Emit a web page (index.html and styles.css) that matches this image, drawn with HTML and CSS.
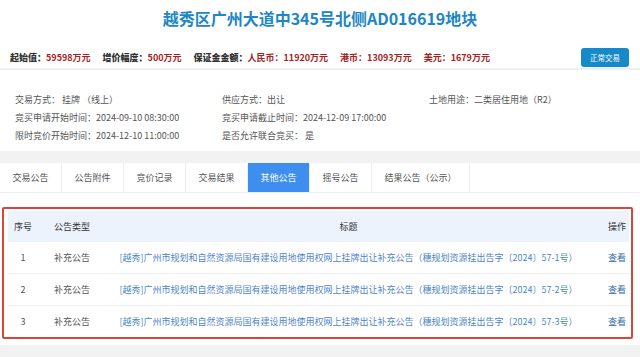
FILE: index.html
```html
<!DOCTYPE html>
<html lang="zh-CN">
<head>
  <meta charset="UTF-8" />
  <meta name="viewport" content="width=device-width, initial-scale=1.0"/>
  <title>越秀区广州大道中345号北侧AD016619地块</title>
  <link rel="stylesheet" href="styles.css">
</head>
<body>
  <h1 class="title">越秀区广州大道中345号北侧AD016619地块</h1>

  <div class="stats">
    <span class="stat"><b>起始值：</b><em>59598万元</em></span>
    <span class="stat"><b>增价幅度：</b><em>500万元</em></span>
    <span class="stat"><b>保证金金额：</b><em>人民币：11920万元</em></span>
    <span class="stat"><em>港币：13093万元</em></span>
    <span class="stat"><em>美元：1679万元</em></span>
    <button class="status-btn">正常交易</button>
  </div>

  <div class="info">
    <div>交易方式： 挂牌 （线上）</div>
    <div>供应方式：出让</div>
    <div>土地用途：二类居住用地（R2）</div>
    <div>竞买申请开始时间：2024-09-10 08:30:00</div>
    <div>竞买申请截止时间：2024-12-09 17:00:00</div>
    <div></div>
    <div>限时竞价开始时间：2024-12-10 11:00:00</div>
    <div>是否允许联合竞买： 是</div>
    <div></div>
  </div>

  <div class="band"></div>

  <ul class="tabs">
    <li>交易公告</li>
    <li>公告附件</li>
    <li>竞价记录</li>
    <li>交易结果</li>
    <li class="active">其他公告</li>
    <li>摇号公告</li>
    <li>结果公告（公示）</li>
  </ul>

  <div class="table-box">
    <table class="notice-table">
      <colgroup>
        <col class="c-no">
        <col class="c-type">
        <col class="c-title">
        <col class="c-op">
      </colgroup>
      <thead>
        <tr>
          <th>序号</th>
          <th>公告类型</th>
          <th>标题</th>
          <th class="op">操作</th>
        </tr>
      </thead>
      <tbody>
        <tr>
          <td>1</td>
          <td>补充公告</td>
          <td class="link">[越秀]广州市规划和自然资源局国有建设用地使用权网上挂牌出让补充公告（穗规划资源挂出告字〔2024〕57-1号）</td>
          <td class="op"><a href="#">查看</a></td>
        </tr>
        <tr>
          <td>2</td>
          <td>补充公告</td>
          <td class="link">[越秀]广州市规划和自然资源局国有建设用地使用权网上挂牌出让补充公告（穗规划资源挂出告字〔2024〕57-2号）</td>
          <td class="op"><a href="#">查看</a></td>
        </tr>
        <tr>
          <td>3</td>
          <td>补充公告</td>
          <td class="link">[越秀]广州市规划和自然资源局国有建设用地使用权网上挂牌出让补充公告（穗规划资源挂出告字〔2024〕57-3号）</td>
          <td class="op"><a href="#">查看</a></td>
        </tr>
      </tbody>
    </table>
  </div>

  <div class="band band-bottom"></div>
</body>
</html>
```

FILE: styles.css
```css
body {
  margin: 0;
  background-color: #fff;
  font-family: 'Microsoft YaHei', 'Noto Sans CJK SC', 'Noto Sans', sans-serif;
  font-size: 9px;
  color: #555;
}

.title {
  margin: 0;
  padding-top: 8px;
  line-height: 21px;
  font-size: 16px;
  font-weight: bold;
  color: #1d86c6;
  text-align: center;
}

.stats {
  display: flex;
  align-items: center;
  height: 22px;
  margin-top: 17px;
  padding: 0 11px 0 10px;
  border-bottom: 2px solid #f0f0f0;
}

.stat {
  margin-right: 12px;
  font-weight: bold;
  white-space: nowrap;
}

.stat b {
  color: #333;
}

.stat em {
  font-style: normal;
  color: #a52222;
}

.status-btn {
  margin-left: auto;
  width: 48px;
  height: 19px;
  padding: 0;
  border: none;
  border-radius: 3px;
  background-color: #1689c9;
  color: #fff;
  font-family: inherit;
  font-size: 7.5px;
}

.info {
  display: grid;
  grid-template-columns: repeat(3, 207px);
  padding: 21px 0 6px 15px;
  line-height: 18px;
  color: #555;
}

.band {
  height: 12px;
  background-color: #f2f2f2;
}

.tabs {
  display: flex;
  margin: 0;
  padding: 0;
  list-style: none;
  border-bottom: 1px solid #eee;
}

.tabs li {
  padding: 0 12.5px;
  line-height: 29px;
  border-right: 1px solid #eee;
  color: #555;
  white-space: nowrap;
}

.tabs li.active {
  background-color: #3e8ef0;
  color: #fff;
}

.table-box {
  margin: 14px 7px 0 2px;
  padding: 2px 2px 0 4px;
  border: 2px solid #d8463a;
  border-radius: 2px;
}

.notice-table {
  width: 100%;
  border-collapse: collapse;
  table-layout: fixed;
}

.c-no { width: 30px; }
.c-type { width: 68px; }
.c-op { width: 38px; }

.notice-table th {
  height: 31px;
  padding: 0;
  background-color: #edf3fc;
  color: #333;
  font-weight: normal;
  text-align: center;
}

.notice-table td {
  height: 31px;
  padding: 0;
  border-bottom: 1px solid #efefef;
  text-align: center;
  white-space: nowrap;
  overflow: hidden;
}

.notice-table tbody tr:last-child td {
  border-bottom: none;
}

.notice-table .link {
  color: #4f86c6;
}

.notice-table .op {
  text-align: right;
  padding-right: 3px;
}

.notice-table .op a {
  color: #2f6da8;
  text-decoration: none;
}

.band-bottom {
  margin-top: 6px;
}
```
